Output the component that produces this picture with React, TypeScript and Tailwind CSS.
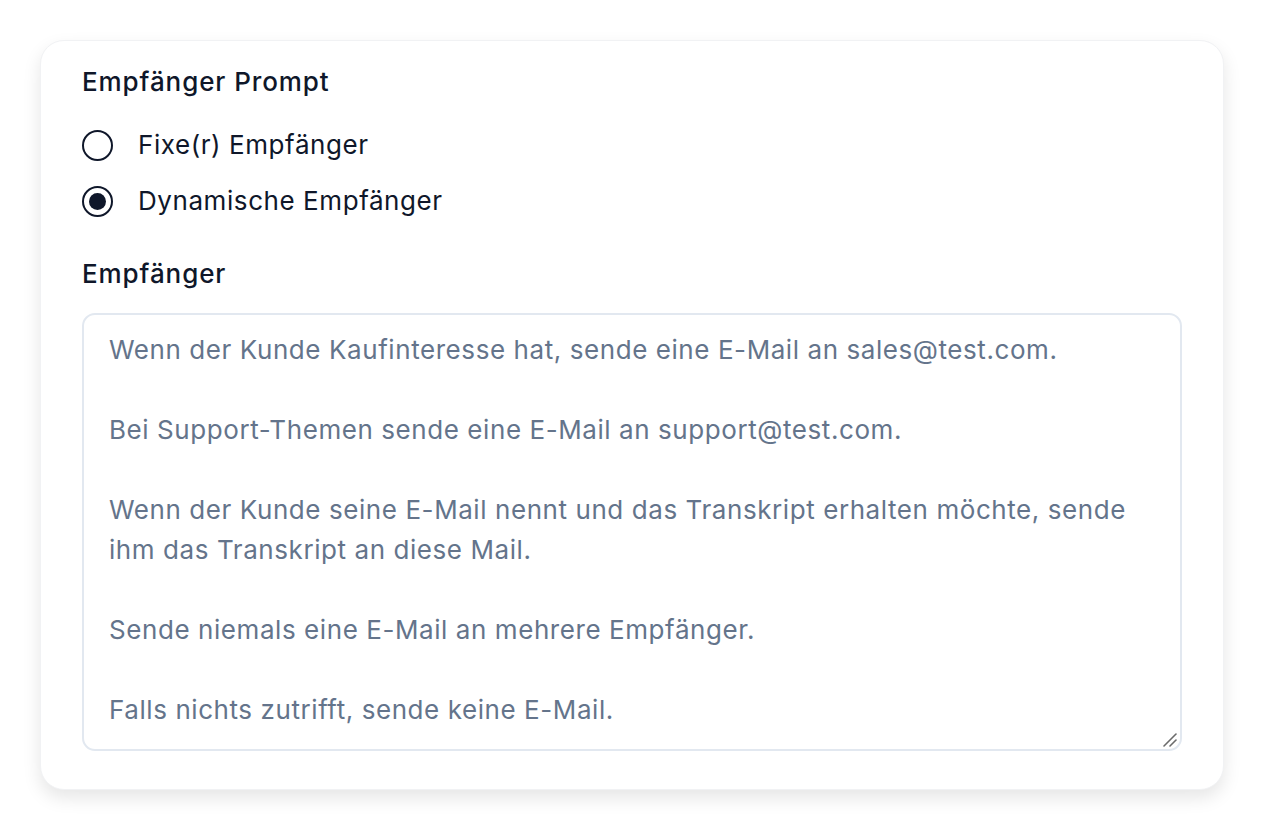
import React, { useState } from 'react';

const PROMPT =
    'Wenn der Kunde Kaufinteresse hat, sende eine E-Mail an sales@test.com.\n\n' +
    'Bei Support-Themen sende eine E-Mail an support@test.com.\n\n' +
    'Wenn der Kunde seine E-Mail nennt und das Transkript erhalten möchte, sende ihm das Transkript an diese Mail.\n\n' +
    'Sende niemals eine E-Mail an mehrere Empfänger.\n\n' +
    'Falls nichts zutrifft, sende keine E-Mail.';

type Mode = 'fixed' | 'dynamic';

const Radio: React.FC<{ checked: boolean; label: string; onSelect: () => void }> = ({ checked, label, onSelect }) => (
    <label className="flex items-center gap-[25px] h-10 cursor-pointer" onClick={onSelect}>
        <span className="w-[31px] h-[31px] rounded-full border-2 border-[#0f172a] flex items-center justify-center shrink-0">
            {checked && <span className="w-[17px] h-[17px] rounded-full bg-[#0f172a]" />}
        </span>
        <span className="text-[26px] leading-10 tracking-[0.022em] text-[#0f172a]">{label}</span>
    </label>
);

export default function App() {
    const [mode, setMode] = useState<Mode>('dynamic');

    return (
        <div className="min-h-screen bg-white p-10" style={{ fontFamily: 'Inter, "Noto Sans", sans-serif' }}>
            <div className="bg-white rounded-3xl border border-[#f1f2f4] shadow-[0_8px_18px_rgba(0,0,0,0.1)] px-[41px] pt-[25px] pb-[38px]">
                <h2 className="text-[26px] leading-8 font-medium tracking-[0.035em] text-[#0f172a]">Empfänger Prompt</h2>

                <div className="mt-[27px] flex flex-col gap-4">
                    <Radio checked={mode === 'fixed'} label="Fixe(r) Empfänger" onSelect={() => setMode('fixed')} />
                    <Radio checked={mode === 'dynamic'} label="Dynamische Empfänger" onSelect={() => setMode('dynamic')} />
                </div>

                <h3 className="mt-[37px] text-[26px] leading-8 font-medium tracking-[0.035em] text-[#0f172a]">Empfänger</h3>

                <div className="relative mt-[23px]">
                    <textarea
                        className="block w-full h-[438px] resize-none rounded-[13px] border-2 border-[#e2e8f0] bg-white pt-[15px] pl-[25px] pr-6 text-[26px] leading-10 tracking-[0.022em] text-[#0f172a] placeholder:text-[#64748b] outline-none"
                        placeholder={PROMPT}
                    />
                    {/* resize grip */}
                    <svg className="absolute right-[4px] bottom-[3px] pointer-events-none" width="16" height="16" viewBox="0 0 16 16">
                        <path d="M14 2 L2 14" stroke="#6b6b6b" strokeWidth="1.6" strokeLinecap="round" />
                        <path d="M14 8 L8 14" stroke="#6b6b6b" strokeWidth="1.6" strokeLinecap="round" />
                    </svg>
                </div>
            </div>
        </div>
    );
}
